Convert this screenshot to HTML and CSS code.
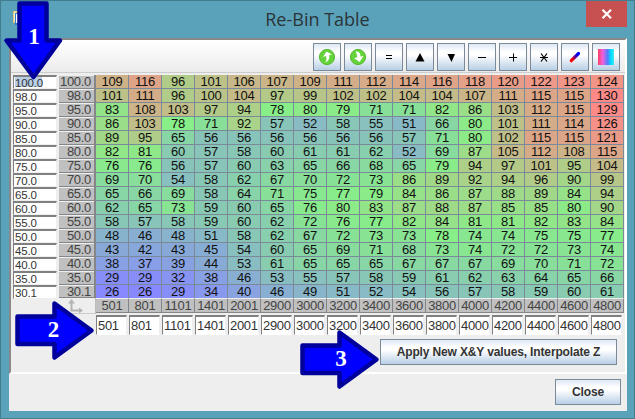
FILE: index.html
```html
<!DOCTYPE html>
<html lang="en">
<head>
<meta charset="utf-8">
<title>Re-Bin Table</title>
<link rel="stylesheet" href="styles.css">
</head>
<body>
<div class="window">
  <header class="titlebar">
    <svg class="app-icon" width="12" height="16" viewBox="0 0 12 16"><rect width="12" height="12" fill="#e8c77d"/><rect x="1" y="1" width="2" height="9" fill="#f6ead0"/><rect x="2" y="2" width="10" height="12" fill="#2f7fd0"/><rect x="3" y="3" width="9" height="9" fill="#fff"/></svg>
    <h1>Re-Bin Table</h1>
    <button class="window-close" aria-label="Close window"><svg width="12" height="10" viewBox="0 0 12 10"><path d="M1.500 .8 10 9.200M10 .8 1.500 9.200" stroke="#fff" stroke-width="2.200"/></svg></button>
  </header>
  <main class="content">
    <section class="panel">
      <div class="toolbar">
        <button class="tool"><svg viewBox="0 0 24 24"><circle cx="12" cy="12" r="7.600" fill="#65d33b" stroke="#55b92f"/><path d="M10 17.500c2-2 1.500-4 1-6.500l-3 1 3.500-5.500 5.500 3-3 .8c1 3-.5 6-4 7.200z" fill="#fff"/></svg></button>
        <button class="tool"><svg viewBox="0 0 24 24"><circle cx="12" cy="12" r="7.600" fill="#65d33b" stroke="#55b92f"/><path d="M9.500 6.500c3-.5 5 1 5 5l3-.5-4 6-5.500-4 3-.5c.3-2-.2-4-1.500-6z" fill="#fff"/></svg></button>
        <button class="tool"><svg viewBox="0 0 24 24"><path d="M9 10.500h6M9 13.500h6" stroke="#000"/></svg></button>
        <button class="tool"><svg viewBox="0 0 24 24"><path d="M12 8 16.500 16.500h-9z"/></svg></button>
        <button class="tool"><svg viewBox="0 0 24 24"><path d="M8.500 9h7.500L12.500 17z"/></svg></button>
        <button class="tool"><svg viewBox="0 0 24 24"><path d="M8 12.500h8" stroke="#000"/></svg></button>
        <button class="tool"><svg viewBox="0 0 24 24"><path d="M8 12.500h8M12.500 8.500v8" stroke="#000"/></svg></button>
        <button class="tool"><svg viewBox="0 0 24 24"><path d="M8 12.500h8M9 8.500l6 8M15 8.500l-6 8" stroke="#000" stroke-width="1.200"/></svg></button>
        <button class="tool"><svg viewBox="0 0 24 24"><defs><linearGradient id="pen" x1="0" y1="1" x2="1" y2="0"><stop offset=".15" stop-color="red"/><stop offset=".5" stop-color="#700080"/><stop offset=".85" stop-color="#00f"/></linearGradient></defs><path d="M8.300 15.700 15.500 8.500" stroke="url(#pen)" stroke-width="3.200" stroke-linecap="round"/></svg></button>
        <button class="tool"><span class="spectrum"></span></button>
      </div>
      <div class="editor">
        <div class="y-inputs" id="yInputs"></div>
        <div class="table">
          <div class="y-head" id="yHead"></div>
          <div class="cells" id="cells"></div>
          <div class="corner"><svg width="16" height="14" viewBox="0 0 16 14"><path d="M4.500 2v9.500H13" fill="none" stroke="#b4b4b4" stroke-width="2"/><path d="M1 4.500 4.500 0 8 4.500zM12 8.500l4 3-4 3z" fill="#b4b4b4"/></svg></div>
          <div class="x-head" id="xHead"></div>
          <div class="x-inputs" id="xInputs"></div>
        </div>
      </div>
      <div class="apply-row"><button class="push apply">Apply New X&amp;Y values, Interpolate Z</button></div>
    </section>
    <footer class="footer"><button class="push close">Close</button></footer>
  </main>
  <svg class="callouts" width="635" height="419" viewBox="0 0 635 419">
    <g fill="#00f" stroke="#00009b" stroke-width="4.500" stroke-linejoin="round">
      <path d="M19.500 3.500h27V40.500H60L33.500 77 6.500 40.500h13z"/>
      <path d="M17.500 316.500h37V303.500L91.500 330.500 54.500 357.500V344h-37z"/>
      <path d="M302.500 345.500h37V332.500L376.500 359.500 339.500 386.500V373h-37z"/>
    </g>
    <g class="callout-text"><text x="34" y="44">1</text><text x="53.500" y="337">2</text><text x="341" y="366">3</text></g>
  </svg>
</div>
<script src="table.js"></script>
</body>
</html>
```
FILE: styles.css
```css
* { box-sizing: border-box; }
body { margin: 0; font-family: "Liberation Sans", Arial, sans-serif; color: #333; }
button { font: inherit; padding: 0; margin: 0; }
.window {
  position: relative;
  width: 635px; height: 419px;
  overflow: hidden;
  background: #5aa2ba;
  border: 1px solid #437d90;
  display: flex; flex-direction: column;
}
.titlebar { height: 37px; flex: none; display: flex; align-items: flex-start; padding-right: 7px; }
.app-icon { margin: 10px 0 0 12px; width: 12px; flex: none; }
h1 {
  flex: 1; margin: 5px 0 0 24px; text-align: center;
  font: 400 18px/27px "Open Sans", sans-serif; color: #2b3437;
}
.window-close {
  width: 41px; height: 26px; border: 0; background: #c75050;
  display: flex; align-items: center; justify-content: center;
}
.content { width: 618px; height: 373px; margin-left: 8px; background: #eee; display: flex; flex-direction: column; }
.panel {
  height: 336px; flex: none;
  border: 2px solid; border-color: #888 #fff #fff #888;
}
.toolbar {
  height: 33px; padding: 3px 5px 0 0;
  display: flex; justify-content: flex-end; gap: 3px;
  background: linear-gradient(#fff, #ececec);
  border-bottom: 1px solid #ccc;
}
.tool, .push {
  border: 1px solid #7a8a99;
  background: linear-gradient(#dde8f3 0%, #fff 30%, #fff 42%, #b8cfe5 100%);
}
.tool { width: 28px; height: 28px; display: flex; align-items: center; justify-content: center; }
.tool svg { width: 24px; height: 24px; flex: none; }
.spectrum { width: 16px; height: 16px; background: linear-gradient(90deg, #ff4060, #f060e0 30%, #5080ff 60%, #00e8ff 85%, #50e0f0); }
.editor { display: flex; gap: 2px; padding: 2px 0 0 2px; }
.y-inputs { width: 44px; }
.y-inputs input {
  display: block; width: 44px; height: 14px; margin: 0; padding: 0 0 0 1px;
  border: solid; border-width: 2px 1px 1px 1px; border-color: #808080 #eee #eee #808080;
  font: 11.5px/11px "Liberation Sans", sans-serif; letter-spacing: -.15px; color: #333; background: #fff; border-radius: 0;
}
.y-inputs input:first-child { background: linear-gradient(#b8cfe5, #b8cfe5) 1px 0 / 27px 10px no-repeat #fff; }
.table { display: grid; grid-template-columns: 37px 527px; grid-template-rows: 223px 16px 21px; font-size: 13px; letter-spacing: -.3px; }
.y-head { border-right: 2px solid #84868a; }
.y-head div {
  height: 14px; line-height: 12px; text-align: right; padding-right: 3px;
  background: #c0c0c0; border-top: 1px solid #eee; border-bottom: 1px solid #84868a; color: #444;
}
.y-head div:last-child { height: 13px; line-height: 11px; }
.cells { display: grid; grid-template-columns: repeat(16, 33px); grid-template-rows: repeat(15, 14px) 13px; color: #111; }
.cells div {
  text-align: center; line-height: 13px;
  border-right: 1px solid #7a8a99; border-bottom: 1px solid #7a8a99;
}
.cells div:nth-child(n+241) { border-bottom: 0; }
.corner { border-bottom: 1px solid #ccc; border-right: 1px solid #bbb; padding: 1px 0 0 8px; }
.x-head { display: grid; grid-template-columns: repeat(16, 33px); }
.x-head div {
  height: 15px; line-height: 14px; text-align: center; background: #c0c0c0; color: #444;
  border-top: 1px solid #eee; border-right: 1px solid #84868a; border-bottom: 1px solid #84868a;
}
.x-inputs { grid-column: 2; display: grid; grid-template-columns: repeat(16, 33px); padding-top: 1px; width: 527px; }
.x-inputs input {
  width: 31px; height: 20px; margin: 0; padding: 0 0 0 1px;
  border: solid; border-width: 2px 1px 1px 1px; border-color: #808080 #eee #fff #808080;
  font: 13px/17px "Liberation Sans", sans-serif; letter-spacing: -.35px; color: #333; background: #fff; border-radius: 0;
}
.apply-row { display: flex; justify-content: flex-end; padding: 4px 8px 0 0; }
.push { height: 26px; font-weight: 700; font-size: 12px; letter-spacing: -.14px; color: #333; }
.apply { width: 237px; }
.footer { display: flex; justify-content: flex-end; padding: 5px 6px 0 0; }
.close { width: 66px; }
.callouts { position: absolute; left: -1px; top: -1px; pointer-events: none; }
.callout-text { fill: #fff; font: 700 23px "Liberation Serif", serif; text-anchor: middle; }
```
FILE: table.js
```js
const xs = [501, 801, 1101, 1401, 2001, 2900, 3000, 3200, 3400, 3600, 3800, 4000, 4200, 4400, 4600, 4800];
const ys = ['100.0', '98.0', '95.0', '90.0', '85.0', '80.0', '75.0', '70.0', '65.0', '60.0', '55.0', '50.0', '45.0', '40.0', '35.0', '30.1'];
const z = [
  [109,116,96,101,106,107,109,111,112,114,116,118,120,122,123,124],
  [101,111,96,100,104,97,99,102,102,104,104,107,111,115,115,130],
  [83,108,103,97,94,78,80,79,71,71,82,86,103,112,115,129],
  [86,103,78,71,92,57,52,58,55,51,66,80,101,111,114,126],
  [89,95,65,56,56,56,56,56,56,57,71,80,102,115,115,121],
  [82,81,60,57,58,60,61,61,62,52,69,87,105,112,108,115],
  [76,76,56,57,60,63,65,66,68,65,79,94,97,101,95,104],
  [69,70,54,58,62,67,70,72,73,86,89,92,94,96,90,99],
  [65,66,69,58,64,71,75,77,79,84,86,87,88,89,84,94],
  [62,65,73,59,60,65,76,80,83,87,88,87,85,85,80,90],
  [58,57,58,59,60,62,72,76,77,82,84,81,81,82,83,84],
  [48,46,48,51,58,62,67,72,73,73,78,74,74,75,75,77],
  [43,42,43,45,54,60,65,69,71,68,73,74,72,72,73,74],
  [38,37,39,44,53,61,65,65,65,67,67,67,69,70,71,72],
  [29,29,32,38,46,53,55,57,58,59,61,62,63,64,65,66],
  [26,26,29,34,40,46,49,51,52,54,56,57,58,59,60,61]
];

// Blue for the lowest value, green for the middle one, red for the highest.
function heat(v) {
  const t = (v - 26) / 52;
  const mix = (a, b, k) => Math.round(a + (b - a) * k);
  return t < 1
    ? `rgb(136,${mix(136, 238, t)},${mix(255, 136, t)})`
    : `rgb(${mix(136, 255, t - 1)},${mix(238, 136, t - 1)},136)`;
}

const fill = (id, html) => { document.getElementById(id).innerHTML = html; };
fill('yInputs', ys.map(v => `<input value="${v}">`).join(''));
fill('yHead', ys.map(v => `<div>${v}</div>`).join(''));
fill('cells', z.flat().map(v => `<div style="background:${heat(v)}">${v}</div>`).join(''));
fill('xHead', xs.map(v => `<div>${v}</div>`).join(''));
fill('xInputs', xs.map(v => `<input value="${v}">`).join(''));
```
